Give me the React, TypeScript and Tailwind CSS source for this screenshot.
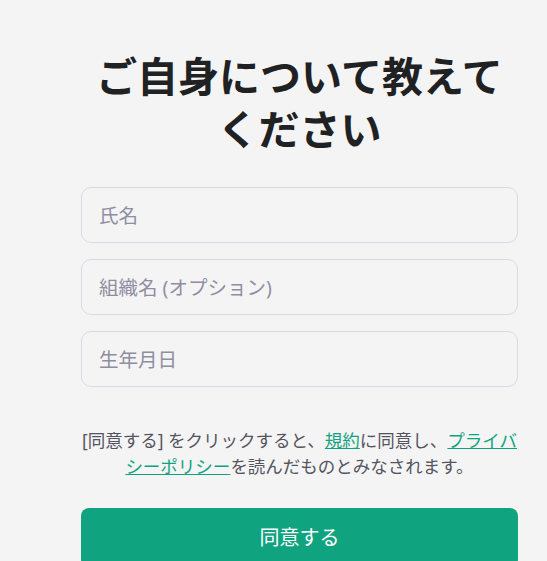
import React, { useState } from "react";

const font = {
  fontFamily: '"Noto Sans", "Noto Sans CJK JP", sans-serif',
};

const Field = ({ placeholder }: { placeholder: string }) => {
  const [value, setValue] = useState("");
  return (
    <input
      value={value}
      onChange={(e) => setValue(e.target.value)}
      placeholder={placeholder}
      className="w-full h-[56px] rounded-[10px] border border-[#d9d9e3] bg-[#f4f4f4] px-[17px] text-[19.5px] text-[#202123] placeholder:text-[#8e8ea0] outline-none"
    />
  );
};

export default function App() {
  return (
    <div className="min-h-screen bg-[#f4f4f4]" style={font}>
      <div className="w-[437px] ml-[81px] pt-[50px] flex flex-col">
        <h1 className="text-center text-[41px] leading-[53px] font-bold text-[#202123]">
          ご自身について教えてください
        </h1>

        <form
          className="mt-[31px] flex flex-col gap-4"
          onSubmit={(e) => e.preventDefault()}
        >
          <Field placeholder="氏名" />
          <Field placeholder="組織名 (オプション)" />
          <Field placeholder="生年月日" />
        </form>

        <p className="mt-[40px] text-center text-[17.5px] leading-[26px] text-[#545460]">
          [同意する] をクリックすると、
          <a href="#" className="text-[#10a37f] underline">
            規約
          </a>
          に同意し、
          <a href="#" className="text-[#10a37f] underline">
            プライバシーポリシー
          </a>
          を読んだものとみなされます。
        </p>

        <button
          type="button"
          className="mt-[29px] h-[60px] w-full rounded-[8px] bg-[#10a37f] text-[20px] text-white"
        >
          同意する
        </button>
      </div>
    </div>
  );
}
